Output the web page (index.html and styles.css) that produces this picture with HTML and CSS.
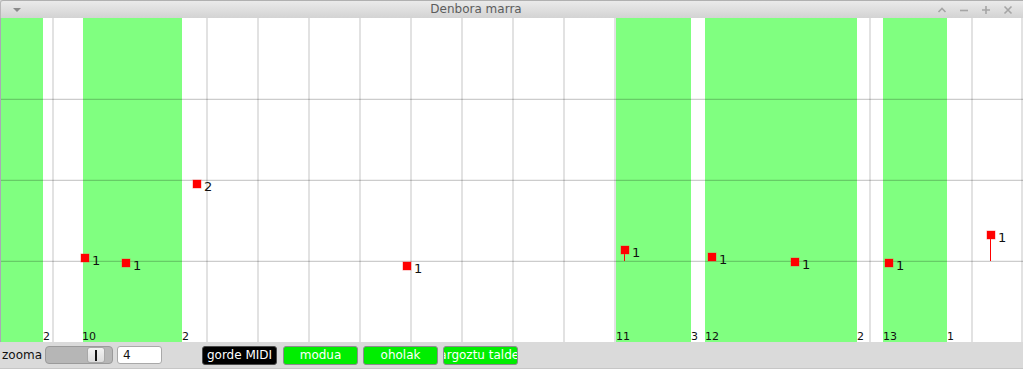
FILE: index.html
```html
<!DOCTYPE html>
<html>
<head>
<meta charset="utf-8">
<link rel="stylesheet" href="styles.css">
</head>
<body>
<div class="window">
  <div class="titlebar">
    <svg class="menu-icon" width="10" height="6" viewBox="0 0 10 6"><path d="M1 1 L9 1 L5 5 Z" fill="#8a8a8a"/></svg>
    <div class="title">Denbora marra</div>
    <div class="controls">
      <svg width="10" height="8" viewBox="0 0 10 8"><path d="M1.5 6 L5 2.5 L8.5 6" fill="none" stroke="#a5a5a5" stroke-width="1.6"/></svg>
      <svg width="10" height="8" viewBox="0 0 10 8"><path d="M1 4.5 L9 4.5" stroke="#a5a5a5" stroke-width="1.6"/></svg>
      <svg width="10" height="10" viewBox="0 0 10 10"><path d="M1 5 L9 5 M5 1 L5 9" stroke="#a5a5a5" stroke-width="1.6"/></svg>
      <svg width="10" height="10" viewBox="0 0 10 10"><path d="M1.5 1.5 L8.5 8.5 M8.5 1.5 L1.5 8.5" stroke="#a5a5a5" stroke-width="1.6"/></svg>
    </div>
  </div>

  <div class="canvas">
    <div class="vline" style="left:52px"></div>
    <div class="vline" style="left:103px"></div>
    <div class="vline" style="left:154px"></div>
    <div class="vline" style="left:206px"></div>
    <div class="vline" style="left:257px"></div>
    <div class="vline" style="left:308px"></div>
    <div class="vline" style="left:359px"></div>
    <div class="vline" style="left:410px"></div>
    <div class="vline" style="left:461px"></div>
    <div class="vline" style="left:512px"></div>
    <div class="vline" style="left:563px"></div>
    <div class="vline" style="left:614px"></div>
    <div class="vline" style="left:665px"></div>
    <div class="vline" style="left:716px"></div>
    <div class="vline" style="left:767px"></div>
    <div class="vline" style="left:818px"></div>
    <div class="vline" style="left:869px"></div>
    <div class="vline" style="left:920px"></div>
    <div class="vline" style="left:971px"></div>
    <div class="vline" style="left:1021px"></div>

    <div class="region" style="left:1px;width:42px"></div>
    <div class="region" style="left:83px;width:99px"></div>
    <div class="region" style="left:616px;width:75px"></div>
    <div class="region" style="left:705px;width:152px"></div>
    <div class="region" style="left:883px;width:64px"></div>

    <div class="hline" style="top:81px"></div>
    <div class="hline" style="top:162px"></div>
    <div class="hline" style="top:243px"></div>

    <div class="blabel" style="left:43px">2</div>
    <div class="blabel" style="left:82px">10</div>
    <div class="blabel" style="left:182px">2</div>
    <div class="blabel" style="left:616px">11</div>
    <div class="blabel" style="left:691px">3</div>
    <div class="blabel" style="left:705px">12</div>
    <div class="blabel" style="left:857px">2</div>
    <div class="blabel" style="left:883px">13</div>
    <div class="blabel" style="left:947px">1</div>

    <div class="stem" style="left:624px;top:236px;height:7px"></div>
    <div class="stem" style="left:711px;top:242px;height:1px"></div>
    <div class="stem" style="left:990px;top:221px;height:22px"></div>

    <div class="marker" style="left:81px;top:236px"><span class="sq"></span><span class="num">1</span></div>
    <div class="marker" style="left:122px;top:241px"><span class="sq"></span><span class="num">1</span></div>
    <div class="marker" style="left:193px;top:162px"><span class="sq"></span><span class="num">2</span></div>
    <div class="marker" style="left:403px;top:244px"><span class="sq"></span><span class="num">1</span></div>
    <div class="marker" style="left:621px;top:228px"><span class="sq"></span><span class="num">1</span></div>
    <div class="marker" style="left:708px;top:235px"><span class="sq"></span><span class="num">1</span></div>
    <div class="marker" style="left:791px;top:240px"><span class="sq"></span><span class="num">1</span></div>
    <div class="marker" style="left:885px;top:241px"><span class="sq"></span><span class="num">1</span></div>
    <div class="marker" style="left:987px;top:213px"><span class="sq"></span><span class="num">1</span></div>
  </div>

  <div class="toolbar">
    <span class="zlabel">zooma</span>
    <div class="slider"><div class="handle"><span class="grip"></span></div></div>
    <div class="entry">4</div>
    <div class="btn btn-dark">gorde MIDI</div>
    <div class="btn btn-green btn-first">modua</div>
    <div class="btn btn-green">oholak</div>
    <div class="btn btn-green btn-last">margoztu taldeak</div>
  </div>
</div>
</body>
</html>
```

FILE: styles.css
```css
* { box-sizing: border-box; }
html, body {
  margin: 0;
  padding: 0;
  width: 1023px;
  height: 369px;
  overflow: hidden;
  background: #dadada;
  font-family: "DejaVu Sans", sans-serif;
}
.window {
  display: flex;
  flex-direction: column;
  width: 1023px;
  height: 369px;
}
.titlebar {
  position: relative;
  height: 18px;
  flex: none;
  display: flex;
  align-items: center;
  background: linear-gradient(#eaeaea, #d3d3d3);
  border-top: 1px solid #b0b0b0;
  border-left: 1px solid #b8b8b8;
  border-top-left-radius: 3px;
}
.menu-icon {
  margin-left: 11px;
  margin-top: 1px;
}
.title {
  flex: 1;
  text-align: center;
  font-size: 12px;
  color: #5c5c5c;
  margin-left: -21px;
  margin-right: 72px;
  line-height: 17px;
}
.controls {
  position: absolute;
  right: 10px;
  top: 4px;
  display: flex;
  align-items: center;
  gap: 12px;
}
.canvas {
  position: relative;
  height: 324px;
  flex: none;
  background: #ffffff;
  border-left: 1px solid #a9a9b4;
  overflow: hidden;
}
.vline {
  position: absolute;
  top: 0;
  bottom: 0;
  width: 2px;
  margin-left: -1px;
  background: #e2e2e2;
}
.region {
  position: absolute;
  top: 0;
  bottom: 0;
  margin-left: -1px;
  background: #80ff80;
}
.hline {
  position: absolute;
  left: 0;
  right: 0;
  height: 1px;
  background: rgba(0, 0, 0, 0.2);
  box-shadow: 0 -1px 0 rgba(0, 0, 0, 0.05);
}
.blabel {
  position: absolute;
  bottom: 0;
  margin-left: -1px;
  font-size: 11px;
  line-height: 10px;
  color: #111;
}
.stem {
  position: absolute;
  width: 1px;
  margin-left: -1px;
  background: #ff0000;
}
.marker {
  position: absolute;
  display: flex;
  align-items: flex-start;
  margin-left: -1px;
}
.sq {
  width: 8px;
  height: 8px;
  background: #ff0000;
  box-shadow: 0 0 0 0.5px rgba(255, 60, 60, 0.5);
}
.num {
  margin-left: 3px;
  margin-top: 0px;
  font-size: 13px;
  line-height: 13px;
  color: #111;
}
.toolbar {
  flex: 1;
  display: flex;
  align-items: center;
  background: #dadada;
  border-bottom: 1px solid #c6c6c6;
  padding-left: 2px;
  font-size: 12px;
}
.zlabel {
  color: #111;
  margin-right: 3px;
}
.slider {
  position: relative;
  width: 68px;
  height: 18px;
  background: #b6b6b6;
  border: 1px solid #9a9a9a;
  border-radius: 4px;
  display: flex;
  align-items: center;
  padding-left: 41px;
}
.handle {
  width: 18px;
  height: 16px;
  background: linear-gradient(#f2f2f2, #dcdcdc);
  border: 1px solid #a8a8a8;
  border-radius: 3px;
  display: flex;
  align-items: center;
  justify-content: center;
}
.grip {
  width: 2px;
  height: 11px;
  background: #111;
}
.entry {
  width: 45px;
  height: 18px;
  margin-left: 4px;
  background: #fff;
  border: 1px solid #a9a9a9;
  border-radius: 3px;
  padding-left: 5px;
  font-size: 12px;
  line-height: 16px;
  color: #111;
}
.btn {
  height: 19px;
  border-radius: 3px;
  display: flex;
  align-items: center;
  justify-content: center;
  white-space: nowrap;
  overflow: hidden;
  font-size: 12px;
  color: #fff;
}
.btn-dark {
  width: 75px;
  margin-left: 40px;
  background: #000;
  border: 1px solid #4a4a4a;
}
.btn-green {
  width: 75px;
  margin-left: 5px;
  background: #00ee00;
  border: 1px solid #8c8c8c;
}
.btn-first {
  margin-left: 6px;
}
.btn-last {
  justify-content: center;
}
```
